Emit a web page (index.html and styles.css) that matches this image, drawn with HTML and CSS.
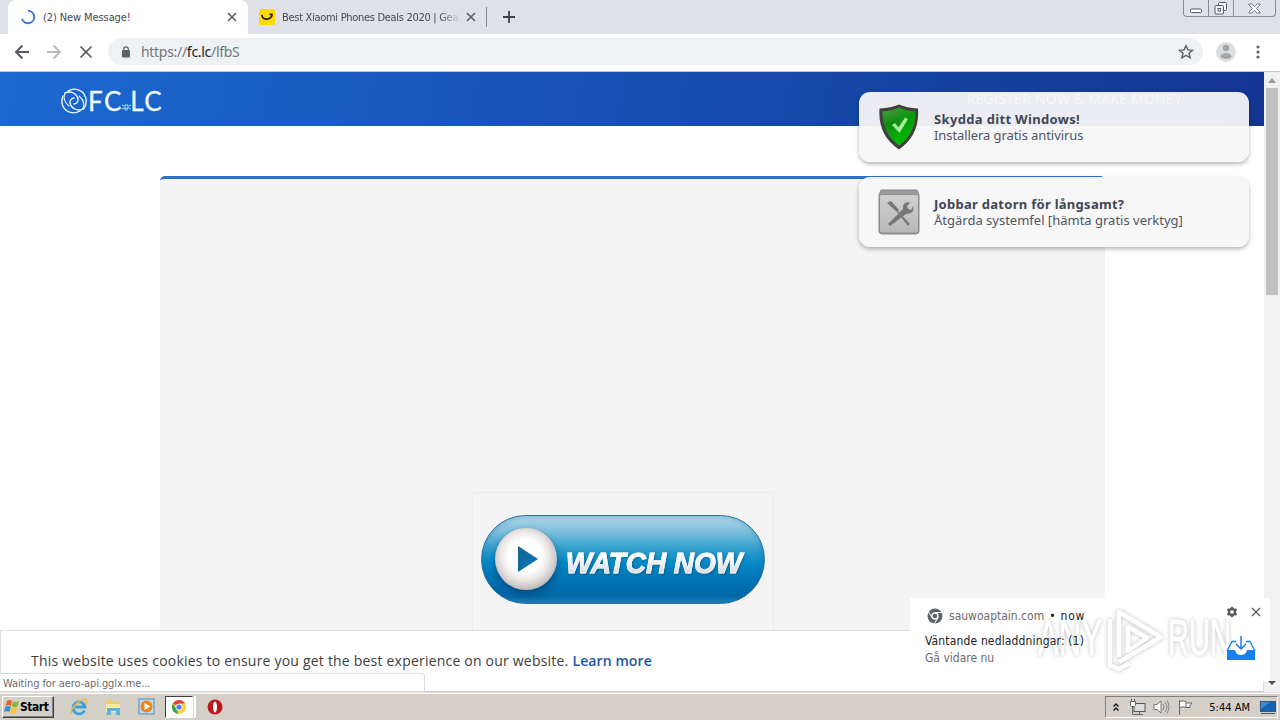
FILE: index.html
```
<!DOCTYPE html>
<html lang="en">
<head>
	<meta charset="UTF-8">
	<meta name="viewport" content="width=device-width, initial-scale=1.0">
	<link rel="stylesheet" href="styles.css">
	<title>(2) New Message!</title>
</head>
<body>
	<div class="desktop">
		<div class="tabstrip">
			<div class="tab active">
				<svg class="tab-icon" width="16" height="16" viewBox="0 0 16 16"><path d="M8 1.8a6.2 6.2 0 1 1-5.9 8" fill="none" stroke="#3b78e0" stroke-width="2"/></svg>
				<span class="tab-title title-message">(2) New Message!</span>
				<svg class="tab-close" width="10" height="10" viewBox="0 0 10 10"><path d="M1 1l8 8M9 1L1 9" stroke="#5f6368" stroke-width="1.7"/></svg>
			</div>
			<div class="tab">
				<svg class="tab-icon" width="16" height="16" viewBox="0 0 16 16"><rect width="16" height="16" rx="2.5" fill="#ffda00"/><path d="M2.8 5.8c.8 5.8 9.5 5.8 10.4-.6M10.5 5.4h3" fill="none" stroke="#222" stroke-width="1.7"/></svg>
				<span class="tab-title title-deals">Best Xiaomi Phones Deals 2020 | Gea</span>
				<svg class="tab-close" width="10" height="10" viewBox="0 0 10 10"><path d="M1 1l8 8M9 1L1 9" stroke="#5f6368" stroke-width="1.7"/></svg>
			</div>
			<svg class="new-tab" width="12" height="12" viewBox="0 0 12 12"><path d="M6 0v12M0 6h12" stroke="#3c4043" stroke-width="1.8"/></svg>
			<div class="window-buttons">
				<span><svg width="14" height="6" viewBox="0 0 14 6"><rect x="1.5" y="1" width="11" height="3.5" rx="1" fill="#fff" stroke="#555b66"/></svg></span>
				<span><svg width="14" height="13" viewBox="0 0 14 13"><g fill="#f4f5f7" stroke="#555b66"><rect x="4.5" y=".5" width="8" height="8" rx="1"/><rect x="1" y="3.5" width="8.5" height="8.5" rx="1"/><rect x="4" y="6.5" width="2.5" height="2.5"/></g></svg></span>
				<span><svg width="13" height="11" viewBox="0 0 13 11"><path d="M1 1h3l2.5 2.7L9 1h3v1L8.5 5.5 12 9v1H9L6.5 7.3 4 10H1V9l3.5-3.5L1 2z" fill="#fff" stroke="#666c77" stroke-width=".9"/></svg></span>
			</div>
		</div>

		<div class="toolbar">
			<svg class="nav-icon" width="16" height="16" viewBox="0 0 16 16"><path d="M15 8H2M8.5 1.5L2 8l6.5 6.5" fill="none" stroke="#55585c" stroke-width="1.9"/></svg>
			<svg class="nav-icon" width="16" height="16" viewBox="0 0 16 16"><path d="M1 8h13M7.5 1.5L14 8l-6.5 6.5" fill="none" stroke="#b9bbbe" stroke-width="1.9"/></svg>
			<svg class="nav-icon" width="16" height="16" viewBox="0 0 16 16"><path d="M2.5 2.5l11 11M13.5 2.5l-11 11" stroke="#55585c" stroke-width="1.7"/></svg>
			<div class="address">
				<svg width="8" height="12" viewBox="0 0 8 12"><rect y="4" width="8" height="7.5" rx="1" fill="#5f6368"/><path d="M1.8 5V3a2.2 2.2 0 0 1 4.4 0v2" fill="none" stroke="#5f6368" stroke-width="1.2"/></svg>
				<span class="url">https://<b>fc.lc</b>/lfbS</span>
				<svg class="star" width="16" height="16" viewBox="0 0 16 16"><path d="M8 1.7l1.9 4.2 4.6.4-3.5 3 1.1 4.5L8 11.4l-4.1 2.4L5 9.3l-3.5-3 4.6-.4z" fill="none" stroke="#5f6368" stroke-width="1.5"/></svg>
			</div>
			<svg class="avatar" width="20" height="20" viewBox="0 0 20 20"><circle cx="10" cy="10" r="10" fill="#dcddde"/><circle cx="10" cy="6" r="3.2" fill="#a3a5a7"/><ellipse cx="10" cy="14" rx="5.5" ry="3" fill="#a3a5a7"/></svg>
			<svg class="dots" width="4" height="14" viewBox="0 0 4 14"><g fill="#5f6368"><circle cx="2" cy="2" r="1.6"/><circle cx="2" cy="7" r="1.6"/><circle cx="2" cy="12" r="1.6"/></g></svg>
		</div>

		<div class="viewport">
			<div class="page">
				<div class="header">
					<div class="logo">
						<svg width="26" height="26" viewBox="0 0 26 26"><g fill="none" stroke="#eaf8ff" stroke-width="1.4" stroke-linecap="round"><path d="M7 3C14-1 22 2 24.500 9c1.500 5 .5 9-2 12"/><path d="M19 23C12 27 4 24 1.500 17c-1-4-.5-7 .5-9"/><path d="M4 5c6-3 12 1 13 6 .5 3-2 5-4 5"/><path d="M22 21c-6 3-12-1-13-6-.5-3 2-5 4-5"/><path d="M4 5c-2 5-1 9 4 13M22 21c2-5 1-9-4-13" stroke-width="1.100"/></g></svg>
						<span class="logo-text">FC<i>.</i>LC</span>
						<svg class="logo-mark" width="9" height="6" viewBox="0 0 9 6"><path d="M0 1l2 1M0 5l2-1M9 1L7 2m2 3L7 4M3 1h3v4H3z" fill="none" stroke="#a8e7ff" stroke-width="1"/></svg>
					</div>
					<span class="register">REGISTER NOW &amp; MAKE MONEY</span>
				</div>
				<div class="content">
					<div class="ad">
						<div class="watch">
							<div class="play"><svg width="20" height="28" viewBox="0 0 20 28"><defs><linearGradient id="tri" x2="1" y2="1"><stop stop-color="#126392"/><stop offset="1" stop-color="#057ab9"/></linearGradient></defs><path d="M0 1l20 13L0 27z" fill="url(#tri)"/></svg></div>
							<span class="watch-text">WATCH NOW</span>
						</div>
					</div>
				</div>
			</div>
			<div class="scrollbar">
				<i class="arrow up"></i>
				<i class="thumb"></i>
				<i class="arrow down"></i>
			</div>

			<div class="pushes">
				<div class="push">
					<svg width="42" height="48" viewBox="0 0 42 48">
						<defs><linearGradient id="shield" y2="1" x2=".3"><stop stop-color="#4aa343"/><stop offset=".45" stop-color="#128813"/><stop offset="1" stop-color="#00bd00"/></linearGradient></defs>
						<path d="M1.5 5.5Q13 5 21 1.5 29 5 40 5.5 42 32 21 46.500-.5 32 1.500 5.500z" fill="#42403f"/>
						<path d="M4.5 8.5Q14 8 21 4.5 28 8 37.5 8.5 38 30 21 42.5 4 30 4.5 8.5z" fill="url(#shield)"/>
						<path d="M21 4.5Q28 8 37.5 8.5 38 30 21 42.5z" fill="#00b400" opacity=".3"/>
						<path d="M14 22l3-2 3.5 4.5L27 14.5l3 1.500-8.500 14z" fill="#a3ed99"/>
					</svg>
					<div>
						<h5 class="push-title-one">Skydda ditt Windows!</h5>
						<p class="push-text-one">Installera gratis antivirus</p>
					</div>
				</div>
				<div class="push">
					<svg width="42" height="48" viewBox="0 0 42 48">
						<defs><linearGradient id="tool" y2="1" x2="0"><stop stop-color="#d0d0d0"/><stop offset="1" stop-color="#b8b8b8"/></linearGradient></defs>
						<path d="M3 2h36l2 5v36q0 3-3 3H4q-3 0-3-3V7z" fill="#9a9a9a" stroke="#888"/>
						<rect x="1.5" y="6.5" width="39" height="38.5" rx="2" fill="url(#tool)" stroke="#8d8d8d"/>
						<path d="M9 15l4-2 8 9-2 2zM20 23l12 13-2 2-11-14z" fill="#777"/>
						<path d="M10 36l15-15q-1-6 5-7l2 1-3 3 1 3 3 1 2-4q2 8-7 8L12 38z" fill="#777"/>
					</svg>
					<div>
						<h5 class="push-title-two">Jobbar datorn för långsamt?</h5>
						<p>Åtgärda systemfel [hämta gratis verktyg]</p>
					</div>
				</div>
			</div>

			<div class="cookies"><span class="cookie-text">This website uses cookies to ensure you get the best experience on our website.</span><a>Learn more</a></div>
			<div class="status"><span>Waiting for aero-api.gglx.me...</span></div>

			<div class="notification">
				<svg class="watermark" width="200" height="66" viewBox="0 0 200 66">
					<text x="1" y="48" textLength="64" lengthAdjust="spacingAndGlyphs">ANY</text>
					<g fill="none" stroke="#fff" stroke-width="4.5" stroke-linejoin="round"><path d="M82 50V5l42 25-42 25"/><path d="M73 12v46l9 4 10-6M91 20v24l19-13z"/></g>
					<text x="131" y="48" textLength="63" lengthAdjust="spacingAndGlyphs">RUN</text>
				</svg>
				<div class="notification-head">
					<svg width="16" height="16" viewBox="0 0 16 16"><circle cx="8" cy="8" r="7.5" fill="#5f6368"/><circle cx="8" cy="8" r="3" fill="#5f6368" stroke="#fff" stroke-width="1.3"/><path d="M8 4.5h7M5 9.5L1.5 4M11 9.5l-3.5 6" stroke="#fff"/></svg>
					<span class="origin">sauwoaptain.com</span>
					<span class="now">• now</span>
					<svg class="gear" width="12" height="12" viewBox="0 0 12 12"><circle cx="6" cy="6" r="4.2" fill="#55595e"/><path d="M6 .7v10.6M1.4 3.3l9.2 5.4M1.4 8.7l9.2-5.4" stroke="#55595e" stroke-width="2.3"/><circle cx="6" cy="6" r="1.8" fill="#fff"/></svg>
					<svg class="dismiss" width="10" height="10" viewBox="0 0 10 10"><path d="M1 1l8 8M9 1L1 9" stroke="#55595e" stroke-width="1.3"/></svg>
				</div>
				<p class="notification-title">Väntande nedladdningar: (1)</p>
				<p class="notification-text">Gå vidare nu</p>
				<svg class="inbox" width="30" height="26" viewBox="0 0 30 26"><path d="M1 16L6 6.5h4M20 6.5h4l5 9.5" fill="none" stroke="#1684ee" stroke-width="1.3"/><path d="M1 15h8q1 5 6 5t6-5h8v10H1z" fill="#1681f0"/><path d="M15 1v12M10 9l5 5 5-5" fill="none" stroke="#1681f0" stroke-width="1.5"/></svg>
			</div>
		</div>

		<div class="taskbar">
			<div class="start">
				<svg width="16" height="16" viewBox="0 0 16 16"><path d="M3 2q3-2 5 0L7 7Q4 5 1.5 7z" fill="#ed602c"/><path d="M9 2.5q3 1.5 6-.5l-1.5 5.5q-3 1.5-5.5 0z" fill="#7dbd35"/><path d="M1.3 8q3-2 5.5 0l-1.5 5Q3 11.5 0 13z" fill="#398ed1"/><path d="M7.7 8.5q3 1.5 5.6 0L12 13.5q-3 1.8-6 0z" fill="#ffc52e"/></svg>
				<span>Start</span>
			</div>
			<div class="quick">
				<svg width="18" height="18" viewBox="0 0 18 18"><path d="M14.5 12.5A6 6 0 1 1 15 9H5" fill="none" stroke="#3aa1df" stroke-width="2.8"/><path d="M1.5 16C-1 11 13-2 16.5 2c1 1 .3 3-.5 4" fill="none" stroke="#e7bd42" stroke-width="1.4"/></svg>
				<svg width="18" height="18" viewBox="0 0 18 18"><path d="M2 4l1-2h5l1 2h6v10H2z" fill="#edce69"/><path d="M2 6h14v8H2z" fill="#f8e9a0"/><path d="M3 10h13v7h-4v-4H7v4H3z" fill="#5ab4dc"/></svg>
				<svg width="18" height="18" viewBox="0 0 18 18"><rect x="1" y="1" width="15" height="15" fill="#bfdcf0" stroke="#508bc0"/><circle cx="8.5" cy="8.5" r="6" fill="#ef8514"/><path d="M6.5 5l6 3.5-6 3.5z" fill="#fff"/></svg>
			</div>
			<div class="task-active">
				<svg width="14" height="14" viewBox="0 0 14 14"><circle cx="7" cy="7" r="7" fill="#ffcf3e"/><path d="M7 7L1 3.4A7 7 0 0 1 13 3.5H7z" fill="#e34133"/><path d="M1 3.4l4 7L6.5 14A7 7 0 0 1 1 3.4z" fill="#34a353"/><circle cx="7" cy="7" r="3.3" fill="#fff"/><circle cx="7" cy="7" r="2.6" fill="#4285f4"/></svg>
			</div>
			<i class="task-edge"></i>
			<svg class="opera" width="16" height="16" viewBox="0 0 16 16"><circle cx="8" cy="8" r="7.5" fill="#b91919"/><ellipse cx="8" cy="8" rx="2" ry="5.5" fill="#fff"/></svg>
			<div class="tray">
				<svg class="chevrons" width="6" height="9" viewBox="0 0 6 9"><path d="M.5 3.5L3 1l2.5 2.5M.5 7.5L3 5l2.5 2.5" fill="none" stroke="#111" stroke-width="1.3"/></svg>
				<svg class="network" width="17" height="17" viewBox="0 0 17 17"><rect x="5" y="4.5" width="11" height="8" fill="#ddd" stroke="#555"/><path d="M7 15.5h7M10.5 13v2M3.5 8v7.5h5" fill="none" stroke="#666"/><path d="M1.5 2.5h5v4l-1 1h-3l-1-1zM2.5 0v3M5.5 0v3" fill="#fff" stroke="#666"/></svg>
				<svg class="volume" width="17" height="16" viewBox="0 0 17 16"><path d="M1 5.5h3L8 2v12l-4-3.5H1z" fill="#fff" stroke="#777"/><path d="M10 5q2 3 0 6M12 3q4 5 0 10M14 1.5q4 6.5 0 13" fill="none" stroke="#888"/></svg>
				<svg class="flag" width="17" height="16" viewBox="0 0 17 16"><path d="M2.5 16V1M3 2.5q3-1.5 6 0v6q-3-1.5-6 0M9 4h6l-2 2.5v2H9" fill="#fff" stroke="#666"/></svg>
				<span class="clock">5:44 AM</span>
				<svg width="16" height="15" viewBox="0 0 16 15"><rect x=".5" y="1.5" width="15" height="10" fill="#1764b5" stroke="#315782"/><path d="M1 2h9l-9 7z" fill="#3f8ad2"/><path d="M1 13.5h14" stroke="#555"/></svg>
			</div>
		</div>
	</div>
</body>
</html>
```

FILE: styles.css
```
* {
	box-sizing: border-box;
}
body {
	margin: 0;
	overflow: hidden;
	font-family: 'DejaVu Sans Condensed', 'DejaVu Sans', sans-serif;
	font-stretch: condensed;
}
h5, p {
	margin: 0;
}
span, p, h5, a {
	white-space: nowrap;
}
svg {
	display: block;
	flex: none;
}
.desktop {
	width: 1280px;
	height: 720px;
	display: flex;
	flex-direction: column;
	background: #fff;
}

/* browser */
.tabstrip {
	height: 34px;
	flex: none;
	display: flex;
	padding-left: 8px;
	background: #dee1e6;
}
.tab {
	width: 239px;
	height: 34px;
	display: flex;
	align-items: center;
	padding: 0 11px 0 12px;
	font-size: 11px;
	color: #45494d;
}
.tab.active {
	background: #fff;
	border-radius: 8px 8px 0 0;
	width: 240px;
}
.tab:not(.active) {
	height: 20px;
	margin-top: 7px;
	border-right: 1px solid #85888d;
	padding-left: 11px;
	padding-right: 10px;
}
.tab-title {
	flex: 1;
	margin-left: 7px;
	overflow: hidden;
}
.title-message {
	letter-spacing: -.1px;
}
.title-deals {
	margin-right: 5px;
	letter-spacing: -.3px;
	-webkit-mask-image: linear-gradient(90deg, #000 88%, transparent);
}
.new-tab {
	margin: 11px 0 0 16px;
}
.window-buttons {
	display: flex;
	height: 17px;
	margin: 0 4px 0 auto;
	border: 1px solid #858b98;
	border-top: 0;
	border-radius: 0 0 4px 4px;
}
.window-buttons span {
	width: 25px;
	display: flex;
	justify-content: center;
	align-items: center;
	border-right: 1px solid #858b98;
}
.window-buttons span:first-child svg {
	margin-top: 5px;
}
.window-buttons span:last-child {
	width: 41px;
	border: 0;
}
.toolbar {
	height: 38px;
	flex: none;
	display: flex;
	align-items: center;
	padding: 0 20px 2px 14px;
	border-bottom: 1px solid #c2c5ca;
}
.nav-icon {
	margin-right: 16px;
}
.address {
	width: 1095px;
	height: 27px;
	margin-left: -2px;
	padding: 0 9px 0 14px;
	display: flex;
	align-items: center;
	border-radius: 14px;
	background: #eff2f4;
}
.url {
	margin-left: 11px;
	font: 14px 'Noto Sans', sans-serif;
	letter-spacing: -.3px;
	color: #71767b;
}
.url b {
	font-weight: 400;
	color: #202124;
}
.star {
	margin-left: auto;
}
.avatar {
	margin: 0 20px 0 13px;
}
.dots {
	margin-left: auto;
}

/* page */
.viewport {
	position: relative;
	height: 620px;
	flex: none;
	display: flex;
	overflow: hidden;
}
.page {
	width: 1264px;
}
.header {
	height: 54px;
	display: flex;
	justify-content: space-between;
	padding: 16px 82px 0 61px;
	background: linear-gradient(100deg, #1b69d1, #133591);
}
.logo {
	position: relative;
	display: flex;
	align-items: center;
	height: 26px;
}
.logo-text {
	margin-left: 1px;
	font: 26px/26px Lato, sans-serif;
	letter-spacing: 1.4px;
	color: #eefaff;
	-webkit-text-stroke: .3px #eefaff;
}
.logo-text i {
	font-style: normal;
	opacity: .3;
}
.logo-mark {
	position: absolute;
	left: 61px;
	top: 16px;
}
.register {
	margin-top: 1px;
	font: 14px/20px 'Open Sans', sans-serif;
	letter-spacing: .26px;
	color: #fff;
}
.content {
	width: 945px;
	height: 520px;
	margin: 50px 0 0 160px;
	padding-top: 313px;
	border-top: 3px solid #2d6fce;
	border-radius: 5px 5px 0 0;
	background: #f4f4f4;
}
.ad {
	width: 302px;
	height: 207px;
	margin-left: 312px;
	padding: 22px 8px;
	border: 1px solid #ececec;
}
.watch {
	width: 284px;
	height: 89px;
	display: flex;
	align-items: center;
	padding-left: 13px;
	border: 1px solid #27729c;
	border-radius: 45px;
	background: linear-gradient(#b1d7e8 0%, #7fc0dd 18%, #319fce 38%, #078bc6 53%, #0077b8 70%, #0068a6 92%, #2581b7);
	box-shadow: inset 2px 0 5px rgba(0, 107, 174, .2), inset -2px 0 5px rgba(0, 107, 174, .2);
}
.play {
	width: 62px;
	height: 62px;
	margin-top: -2px;
	padding: 17px 0 0 23px;
	border-radius: 50%;
	background: radial-gradient(circle at 48% 45%, #fff 35%, #ebe7e6 52%, #bcb5b5 75%);
	box-shadow: 0 4px 8px rgba(0, 48, 87, .55);
}
.watch-text {
	margin: 7px 0 0 7px;
	padding: 0 5px 0 2px;
	font: italic bold 30px/34px 'Liberation Sans', sans-serif;
	letter-spacing: -.1px;
	background: linear-gradient(#fff 35%, #d4d4dc 85%);
	-webkit-background-clip: text;
	color: transparent;
	-webkit-text-stroke: .9px #edf0f5;
	filter: drop-shadow(1px 1px 1px rgba(0, 55, 96, .4));
	transform: scaleX(.935);
	transform-origin: left;
}
.scrollbar {
	width: 16px;
	padding: 6px 2px 7px;
	display: flex;
	flex-direction: column;
	align-items: center;
	background: #f1f1f1;
}
.arrow {
	border: 4px solid transparent;
}
.up {
	border-top: 0;
	border-bottom: 5px solid #999;
}
.thumb {
	width: 12px;
	height: 207px;
	margin-top: 5px;
	background: #c1c1c1;
}
.down {
	margin-top: auto;
	border-bottom: 0;
	border-top: 4px solid #505050;
}

/* popups over the page */
.pushes {
	position: absolute;
	left: 859px;
	top: 20px;
}
.push {
	width: 390px;
	height: 70px;
	display: flex;
	align-items: center;
	margin-bottom: 15px;
	padding-left: 19px;
	border-radius: 11px;
	background: rgba(247, 247, 247, .95);
	box-shadow: 0 2px 4px rgba(0, 0, 0, .3);
	font: 13px/16px 'Noto Sans', sans-serif;
	color: #505564;
}
.push div {
	margin-left: 14px;
}
.push h5 {
	font-size: 13px;
	color: #414654;
}
.push-title-one {
	letter-spacing: .34px;
}
.push-text-one {
	letter-spacing: -.08px;
}
.push-title-two {
	letter-spacing: .28px;
}
.cookies {
	position: absolute;
	left: 0;
	bottom: 0;
	width: 1264px;
	height: 62px;
	padding: 20px 0 0 30px;
	border: 1px solid #dedede;
	border-bottom-color: #c9c9c9;
	background: #fff;
	font: 14px/20px 'Open Sans', sans-serif;
	color: #404040;
}
.cookie-text {
	letter-spacing: .205px;
}
.cookies a {
	margin-left: 4px;
	font-weight: 600;
	letter-spacing: .1px;
	color: #1e56a8;
}
.status {
	position: absolute;
	left: 0;
	bottom: 0;
	width: 425px;
	height: 19px;
	padding-left: 3px;
	border: 1px solid #dcdcdc;
	border-left: 0;
	border-radius: 0 4px 0 0;
	background: #fff;
	font-size: 11px;
	line-height: 19px;
	letter-spacing: -.1px;
	color: #6d6d6d;
}
.notification {
	position: absolute;
	left: 910px;
	top: 526px;
	width: 360px;
	height: 83px;
	padding: 10px 15px 0;
	background: #fff;
	font-size: 12px;
	line-height: 17px;
	color: #6c6c6c;
}
.notification-head {
	position: relative;
	display: flex;
	align-items: center;
	height: 16px;
	margin: 0 -6px 0 2px;
}
.origin {
	margin-left: 6px;
}
.now {
	margin-left: 5px;
	letter-spacing: .8px;
	color: #222;
}
.gear {
	margin: -8px 13px 0 auto;
}
.dismiss {
	margin-top: -8px;
}
.notification-title {
	position: relative;
	margin-top: 9px;
	letter-spacing: .15px;
	color: #222;
}
.inbox {
	position: absolute;
	left: 316px;
	top: 37px;
}
.watermark {
	position: absolute;
	left: 127px;
	top: 9px;
	opacity: .7;
	filter: drop-shadow(0 0 2px rgba(0, 0, 0, .35));
}
.watermark text {
	font: 50px 'Liberation Sans', sans-serif;
	fill: #fff;
	stroke: #fff;
	stroke-width: 1px;
}

/* taskbar */
.taskbar {
	height: 28px;
	flex: none;
	display: flex;
	align-items: center;
	padding: 3px 2px 2px;
	border-top: 1px solid #e6e2da;
	background: #d4d0c8;
	box-shadow: inset 0 1px #fff;
}
.start {
	width: 52px;
	height: 22px;
	display: flex;
	align-items: center;
	border: 1px solid;
	border-color: #fff #404040 #404040 #fff;
	box-shadow: inset -1px -1px #808080;
	font-size: 12px;
	font-weight: bold;
	letter-spacing: -.45px;
	color: #000;
}
.start svg {
	margin: 0 0 0 1px;
}
.quick {
	display: flex;
	gap: 16px;
	margin-left: 16px;
}
.task-active {
	width: 28px;
	height: 22px;
	display: flex;
	align-items: center;
	justify-content: center;
	margin-left: 9px;
	border: 1px solid;
	border-color: #404040 #fff #fff #404040;
	background: #fff;
}
.task-edge {
	width: 3px;
	height: 22px;
	border-right: 2px solid #fff;
}
.opera {
	margin-left: 11px;
}
.tray {
	width: 173px;
	height: 22px;
	display: flex;
	align-items: center;
	margin-left: auto;
	padding: 0 1px 0 7px;
	border: 1px solid;
	border-color: #808080 #fff #fff #808080;
	font-size: 11px;
	color: #000;
}
.network {
	margin-left: 10px;
}
.volume, .flag {
	margin-left: 7px;
}
.clock {
	margin: 0 10px 0 auto;
}
```
